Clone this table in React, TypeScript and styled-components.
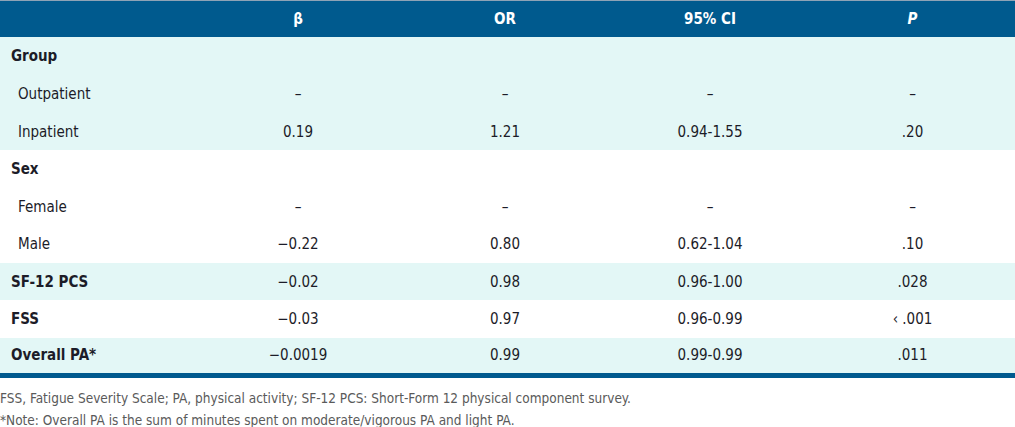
import React from 'react';
import styled, { createGlobalStyle } from 'styled-components';

const GlobalStyle = createGlobalStyle`
  body {
    margin: 0;
    background: #ffffff;
    font-family: "DejaVu Sans Condensed", "Liberation Sans Narrow", "Liberation Sans", sans-serif;
    color: #1c1c28;
  }
`;

const Wrapper = styled.div`
  width: 1015px;
  border-top: 1px solid #8ea3b6;
`;

const Table = styled.table`
  width: 100%;
  border-collapse: collapse;
  table-layout: fixed;
  border-bottom: 5px solid #005a8e;
`;

const HeadRow = styled.tr`
  background: #005a8e;
  height: 36px;
`;

const HeadCell = styled.th<{ $italic?: boolean }>`
  color: #ffffff;
  font-weight: 700;
  font-size: 15px;
  text-align: center;
  padding: 0;
  font-style: ${({ $italic }) => ($italic ? 'italic' : 'normal')};
`;

const Row = styled.tr<{ $shade?: boolean; $tall?: boolean }>`
  background: ${({ $shade }) => ($shade ? '#e3f7f6' : '#ffffff')};
  height: ${({ $tall }) => ($tall ? '38px' : '37px')};
`;

const LabelCell = styled.td<{ $sub?: boolean }>`
  padding: 0 0 0 ${({ $sub }) => ($sub ? '18px' : '11px')};
  font-size: 15px;
  font-weight: ${({ $sub }) => ($sub ? 400 : 700)};
  text-align: left;
  white-space: nowrap;
`;

const ValueCell = styled.td`
  padding: 0;
  font-size: 15px;
  text-align: center;
`;

const Notes = styled.div`
  padding: 9px 0 0 0;
  font-size: 13.5px;
  line-height: 22px;
  color: #5a5a5a;
`;

type Line = { label: string; sub?: boolean; shade?: boolean; tall?: boolean; values?: string[] };

const lines: Line[] = [
  { label: 'Group', shade: true, tall: true },
  { label: 'Outpatient', sub: true, shade: true, tall: true, values: ['–', '–', '–', '–'] },
  { label: 'Inpatient', sub: true, shade: true, values: ['0.19', '1.21', '0.94-1.55', '.20'] },
  { label: 'Sex', tall: true },
  { label: 'Female', sub: true, values: ['–', '–', '–', '–'] },
  { label: 'Male', sub: true, tall: true, values: ['−0.22', '0.80', '0.62-1.04', '.10'] },
  { label: 'SF-12 PCS', shade: true, values: ['−0.02', '0.98', '0.96-1.00', '.028'] },
  { label: 'FSS', tall: true, values: ['−0.03', '0.97', '0.96-0.99', '‹ .001'] },
  { label: 'Overall PA*', shade: true, values: ['−0.0019', '0.99', '0.99-0.99', '.011'] },
];

const App: React.FC = () => {
  return (
    <Wrapper>
      <GlobalStyle />
      <Table>
        <colgroup>
          <col style={{ width: 196 }} />
          <col style={{ width: 204 }} />
          <col style={{ width: 210 }} />
          <col style={{ width: 200 }} />
          <col style={{ width: 205 }} />
        </colgroup>
        <thead>
          <HeadRow>
            <HeadCell />
            <HeadCell>β</HeadCell>
            <HeadCell>OR</HeadCell>
            <HeadCell>95% CI</HeadCell>
            <HeadCell $italic>P</HeadCell>
          </HeadRow>
        </thead>
        <tbody>
          {lines.map((line) => (
            <Row key={line.label} $shade={line.shade} $tall={line.tall}>
              <LabelCell $sub={line.sub}>{line.label}</LabelCell>
              {(line.values ?? ['', '', '', '']).map((v, i) => (
                <ValueCell key={i}>{v}</ValueCell>
              ))}
            </Row>
          ))}
        </tbody>
      </Table>
      <Notes>
        <div>FSS, Fatigue Severity Scale; PA, physical activity; SF-12 PCS: Short-Form 12 physical component survey.</div>
        <div>*Note: Overall PA is the sum of minutes spent on moderate/vigorous PA and light PA.</div>
      </Notes>
    </Wrapper>
  );
};

export default App;
